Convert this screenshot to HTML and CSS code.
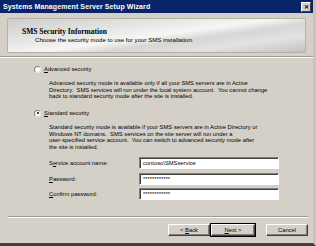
FILE: index.html
```html
<!DOCTYPE html>
<html lang="en">
<head>
    <meta charset="UTF-8">
    <title>Systems Management Server Setup Wizard</title>
    <link rel="stylesheet" href="styles.css">
</head>
<body>
    <div class="window">
        <div class="titlebar">
            <span class="title">Systems Management Server Setup Wizard</span>
            <span class="close">&#x2715;</span>
        </div>

        <div class="header">
            <div class="header-title">SMS Security Information</div>
            <div class="header-sub">Choose the security mode to use for your SMS installation.</div>
        </div>
        <div class="etch top-etch"></div>

        <div class="content">
            <label class="radio-row">
                <span class="radio"></span>
                <span><u>A</u>dvanced security</span>
            </label>
            <p class="desc">
                Advanced security mode is available only if all your SMS servers are in Active<br>
                Directory.&nbsp; SMS services will run under the local system account.&nbsp; You cannot change<br>
                back to standard security mode after the site is installed.
            </p>

            <label class="radio-row">
                <span class="radio checked"></span>
                <span><u>S</u>tandard security</span>
            </label>
            <p class="desc last">
                Standard security mode is available if your SMS servers are in Active Directory or<br>
                Windows NT domains.&nbsp; SMS services on the site server will run under a<br>
                user-specified service account.&nbsp; You can switch to advanced security mode after<br>
                the site is installed.
            </p>

            <div class="field">
                <span class="field-label">S<u>e</u>rvice account name:</span>
                <span class="input">contoso\SMSservice</span>
            </div>
            <div class="field">
                <span class="field-label"><u>P</u>assword:</span>
                <span class="input">************</span>
            </div>
            <div class="field">
                <span class="field-label"><u>C</u>onfirm password:</span>
                <span class="input">************</span>
            </div>
        </div>

        <div class="etch bottom-etch"></div>

        <div class="buttons">
            <button class="btn">&lt; <u>B</u>ack</button>
            <button class="btn default"><u>N</u>ext &gt;</button>
            <button class="btn cancel">Cancel</button>
        </div>
    </div>
</body>
</html>
```

FILE: styles.css
```css
body {
    margin: 0;
    background-color: #d4d0c8;
    font-family: "Liberation Sans", Arial, sans-serif;
    color: #000;
}
.window {
    width: 316px;
    height: 246px;
    box-sizing: border-box;
    overflow: hidden;
    background-color: #d4d0c8;
    border-right: 3px solid #c8c4bc;
    border-bottom: 3px solid #404040;
    display: flex;
    flex-direction: column;
}
.titlebar {
    height: 13px;
    background-color: #0a246a;
    color: #fff;
    display: flex;
    align-items: center;
    justify-content: space-between;
    padding: 0 2px 0 3px;
}
.title {
    font-weight: bold;
    font-size: 7px;
    letter-spacing: 0.1px;
}
.close {
    width: 8px;
    height: 8px;
    background-color: #d4d0c8;
    color: #000;
    font-size: 6px;
    font-weight: bold;
    line-height: 8px;
    text-align: center;
    border: 1px solid;
    border-color: #fff #404040 #404040 #fff;
}
.header {
    margin: 5px 7px 0 7px;
    height: 35px;
    box-sizing: border-box;
    padding: 9px 0 0 14px;
    border: 1px solid #b4b1ab;
    border-radius: 2px;
    background: linear-gradient(172deg, #cdcdcb 0%, #e8e8e6 35%, #f6f6f4 50%, #d6d6d4 62%, #e2e2e0 78%, #c2c2c0 100%);
}
.header-title {
    font-family: "Liberation Serif", "Times New Roman", serif;
    font-weight: bold;
    font-size: 7.5px;
    line-height: 8px;
}
.header-sub {
    font-size: 6.1px;
    line-height: 8px;
    padding-left: 13px;
}
.etch {
    height: 0;
    border-top: 1px solid #9c9a94;
    border-bottom: 1px solid #fff;
}
.top-etch {
    margin-top: 3px;
}
.content {
    padding: 7px 0 0 34px;
    font-size: 5.8px;
}
.radio-row {
    display: flex;
    align-items: center;
    gap: 3px;
    height: 8px;
}
.radio {
    width: 7px;
    height: 7px;
    box-sizing: border-box;
    border-radius: 50%;
    background-color: #fff;
    border: 1px solid #808080;
    border-right-color: #e8e8e8;
    border-bottom-color: #e8e8e8;
    position: relative;
}
.radio.checked::after {
    content: "";
    position: absolute;
    left: 1.5px;
    top: 1.5px;
    width: 2px;
    height: 2px;
    border-radius: 50%;
    background-color: #000;
}
.desc {
    margin: 7px 0 9.5px 15px;
    line-height: 6.5px;
    white-space: nowrap;
}
.desc.last {
    margin-bottom: 7px;
}
.field {
    display: flex;
    align-items: center;
    margin: 0 0 3.5px 15px;
}
.field-label {
    width: 90px;
}
.input {
    width: 140px;
    height: 12px;
    box-sizing: border-box;
    background-color: #fff;
    border: 1px solid;
    border-color: #808080 #fff #fff #808080;
    box-shadow: inset 1px 1px 0 #404040;
    padding: 0 0 0 3px;
    line-height: 10px;
}
.bottom-etch {
    margin: auto 5px 0 8px;
}
.buttons {
    display: flex;
    justify-content: flex-end;
    padding: 6px 5px 7px 0;
}
.btn {
    width: 42px;
    height: 12px;
    padding: 0;
    font-family: "Liberation Sans", Arial, sans-serif;
    font-size: 5.8px;
    background-color: #d4d0c8;
    color: #000;
    border: 1px solid;
    border-color: #fff #404040 #404040 #fff;
    box-shadow: inset -1px -1px 0 #808080;
}
.btn.default {
    margin-left: 1px;
    width: 44px;
    outline: 1px solid #000;
}
.btn.cancel {
    margin-left: 11px;
}
```
